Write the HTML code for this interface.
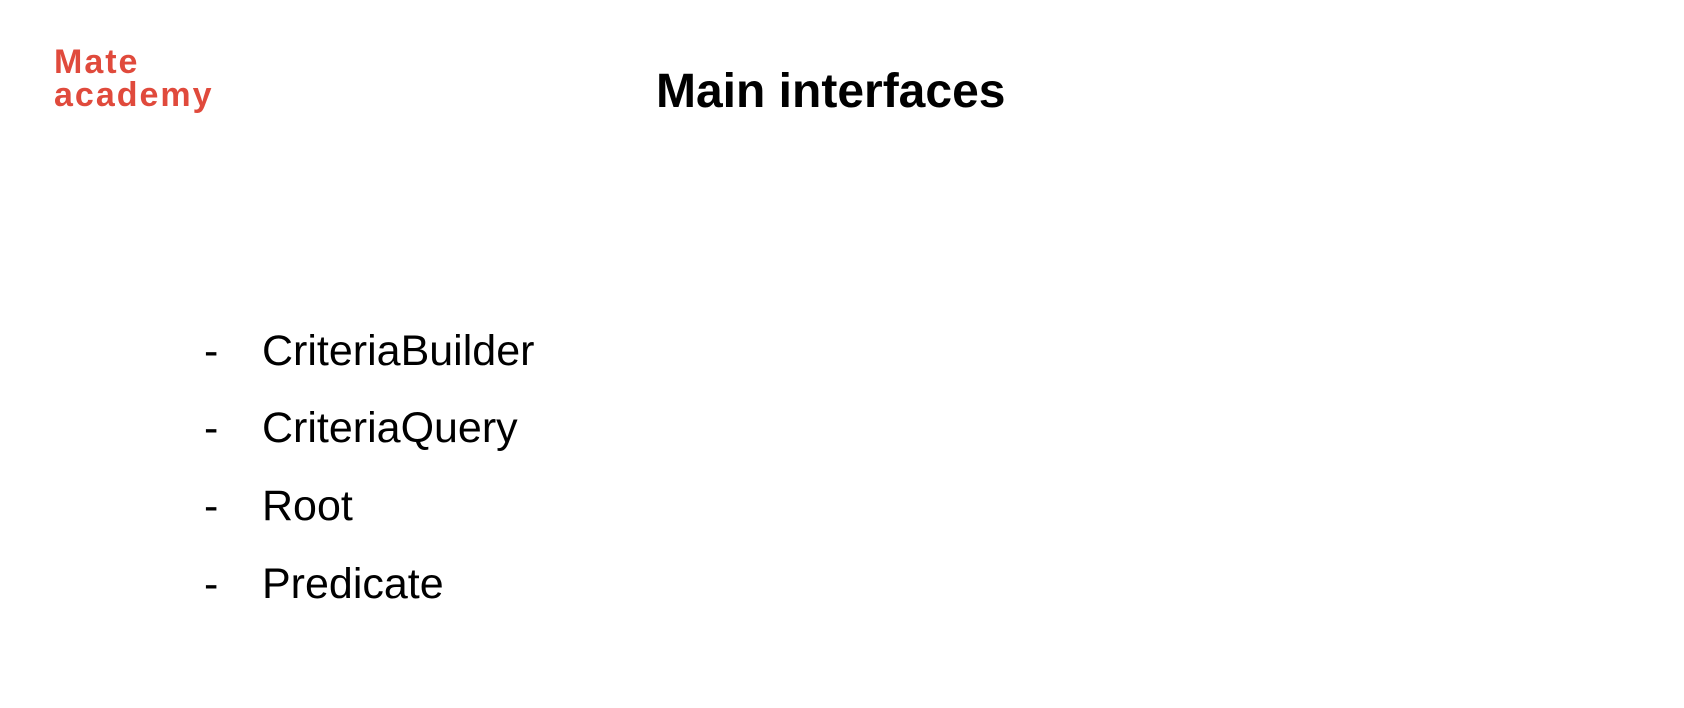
<!DOCTYPE html>
<html><head><meta charset="utf-8"><style>
html,body{margin:0;padding:0;background:#fff;width:1684px;height:708px;overflow:hidden;position:relative;font-family:"Liberation Sans",Arial,sans-serif}
.a{position:absolute;line-height:1;white-space:nowrap}
.logo{font-size:34px;font-weight:bold;color:#e04a3c;letter-spacing:2px}
.t{font-size:48px;font-weight:bold;color:#000}
.li{font-size:43px;color:#000}
</style></head><body>
<div class="a logo" style="left:54px;top:45px">Mate</div>
<div class="a logo" style="left:54px;top:78px">academy</div>
<div class="a t" style="left:656px;top:68px">Main interfaces</div>
<div class="a li" style="left:204px;top:330px">-</div><div class="a li" style="left:262px;top:330px">CriteriaBuilder</div>
<div class="a li" style="left:204px;top:407px">-</div><div class="a li" style="left:262px;top:407px">CriteriaQuery</div>
<div class="a li" style="left:204px;top:485px">-</div><div class="a li" style="left:262px;top:485px">Root</div>
<div class="a li" style="left:204px;top:563px">-</div><div class="a li" style="left:262px;top:563px">Predicate</div>
</body></html>
